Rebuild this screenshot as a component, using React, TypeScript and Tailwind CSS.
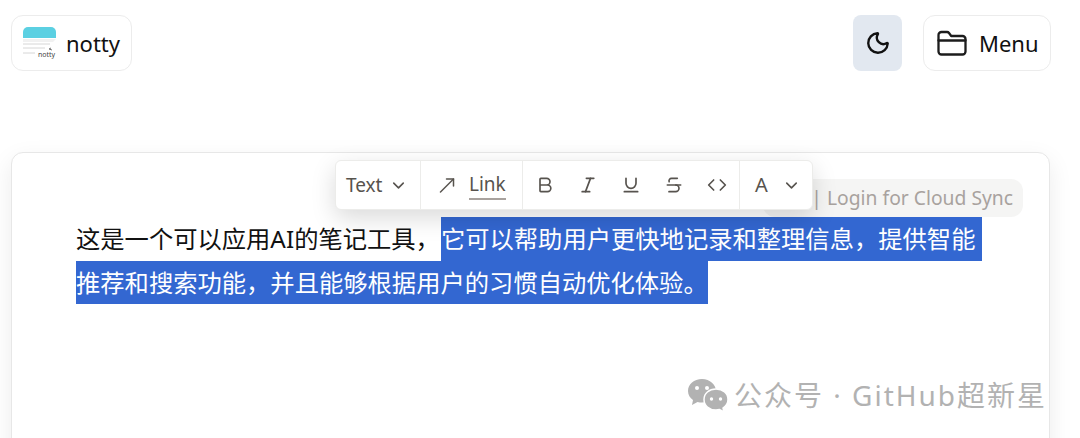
import { Bold, ChevronDown, Code, Italic, Moon, Strikethrough, Underline } from 'lucide-react';

const font = "font-['Noto_Sans','Noto_Sans_CJK_SC',sans-serif]";

function Logo() {
  return (
    <svg width="34" height="32" viewBox="0 0 34 32" className="shrink-0">
      <path d="M0 5a5 5 0 0 1 5-5h23a5 5 0 0 1 5 5v6H0z" fill="#5bd0e2" />
      <path d="M0 12h33l-3 3H0z" fill="#f1f1f1" />
      <path d="M0 17h27M0 21h22M0 26h12" stroke="#d6d6d6" strokeWidth="1" />
      <path d="M28 21l-2 1 3 1" stroke="#777" strokeWidth="1" fill="none" />
      <text x="15" y="30" fontSize="7" fill="#444" fontFamily="Noto Sans, sans-serif">notty</text>
    </svg>
  );
}

function FolderIcon() {
  return (
    <svg width="30" height="26" viewBox="0 0 30 26" fill="none" stroke="#1c1c1c" strokeWidth="2.300" strokeLinejoin="round" strokeLinecap="round" className="shrink-0">
      <path d="M1.500 5a3 3 0 0 1 3-3h5.500a2.500 2.500 0 0 1 2 1l2.200 3H25.500a3 3 0 0 1 3 3v12.500a3 3 0 0 1-3 3h-21a3 3 0 0 1-3-3z" />
      <path d="M1.500 10.500h27" />
    </svg>
  );
}

function LinkArrow() {
  return (
    <svg width="16" height="16" viewBox="0 0 16 16" fill="none" stroke="currentColor" strokeWidth="1.500" strokeLinecap="round" strokeLinejoin="round" className="shrink-0">
      <path d="M1.500 15L14.500 2" />
      <path d="M7.500 2h7v7" />
    </svg>
  );
}

function WeChatIcon() {
  return (
    <svg width="41" height="33" viewBox="0 0 41 33" className="shrink-0">
      <path d="M15 0C7 0 1 5 1 12c0 4 2 7 5 9l-1 5 5.500-3c1.500.4 3 .6 4.500.6C23 23.600 29 18 29 12S23 0 15 0z" fill="#b2b2b2" />
      <path d="M29 10c-7 0-12 4.500-12 10.500S22 31 29 31c1.200 0 2.300-.2 3.500-.5L37 33l-1-4c3-2 5-5 5-8.500C41 14.500 36 10 29 10z" fill="#b2b2b2" stroke="#fff" strokeWidth="1.500" />
      <circle cx="10" cy="9" r="2" fill="#fff" />
      <circle cx="20" cy="9" r="2" fill="#fff" />
      <circle cx="24.500" cy="20" r="1.700" fill="#fff" />
      <circle cx="33.500" cy="20" r="1.700" fill="#fff" />
    </svg>
  );
}

const marks = [
  { Icon: Bold, key: 'bold' },
  { Icon: Italic, key: 'italic' },
  { Icon: Underline, key: 'underline' },
  { Icon: Strikethrough, key: 'strike' },
  { Icon: Code, key: 'code' },
];

function Toolbar() {
  return (
    <div className="absolute left-[323px] top-[7px] z-10 flex h-[50px] w-[478px] items-stretch rounded-md border border-[#ececea] bg-white text-[#57534e] shadow-[0_8px_24px_rgba(0,0,0,0.15)]">
      <div className="flex w-[85px] items-center gap-[7px] pl-[10px] text-[19px] border-r border-[#ececea]">
        <span>Text</span>
        <ChevronDown size={19} strokeWidth={2} />
      </div>
      <div className="flex w-[102px] items-center gap-[14px] pl-[18px] text-[19px] border-r border-[#ececea]">
        <LinkArrow />
        <span className="border-b-2 border-[#a8a29e] leading-[27px]">Link</span>
      </div>
      <div className="flex w-[217px] items-center gap-[23px] pl-[12px] border-r border-[#ececea]">
        {marks.map(({ Icon, key }) => (
          <Icon key={key} size={20} strokeWidth={2} />
        ))}
      </div>
      <div className="flex items-center gap-[14px] pl-[15px] text-[20px]">
        <span>A</span>
        <ChevronDown size={19} strokeWidth={2} />
      </div>
    </div>
  );
}

export default function App() {
  return (
    <div className={`${font} h-[438px] w-[1080px] overflow-hidden bg-white pl-[11px] pr-[30px] pt-[15px]`}>
      <header className="-mr-px flex h-[56px] items-stretch justify-between">
        <div className="flex w-[121px] items-center gap-[9px] rounded-xl border border-[#ececec] bg-white pl-[11px] text-[22px] text-[#111]">
          <Logo />
          <span>notty</span>
        </div>
        <div className="flex items-stretch gap-[21px]">
          <button className="flex w-[49px] items-center justify-center rounded-lg bg-[#e2e8f0] text-[#111]">
            <Moon size={26} strokeWidth={2.2} />
          </button>
          <button className="flex w-[128px] items-center gap-[12px] rounded-xl border border-[#ececec] bg-white pl-[13px] text-[22px] text-[#111]">
            <FolderIcon />
            <span>Menu</span>
          </button>
        </div>
      </header>

      <main className="relative mt-[81px] h-[400px] rounded-xl border border-[#e7e7e7] bg-white pl-[64px] pt-[64px] shadow-[0_8px_24px_rgba(0,0,0,0.08)]">
        <Toolbar />
        <div className="absolute right-[26px] top-[26px] flex h-[38px] w-[260px] items-center justify-end rounded-xl bg-[#f5f5f4] pr-[10px] text-[19.300px] text-[#a8a29e]">
          | Login for Cloud Sync
        </div>
        <div className="relative text-[24.300px] leading-[43px] text-[#111] whitespace-nowrap">
          <div className="flex h-[44px]">
            <span className="mr-[1px]">这是一个可以应用AI的笔记工具，</span>
            <span className="w-[541px] bg-[#3367d1] text-white">它可以帮助用户更快地记录和整理信息，提供智能</span>
          </div>
          <div className="flex h-[43px]">
            <span className="bg-[#3367d1] text-white">推荐和搜索功能，并且能够根据用户的习惯自动优化体验。</span>
          </div>
        </div>
        <div className="absolute left-[675px] top-[221px] flex items-center gap-[6px] whitespace-nowrap text-[28px] tracking-[2px] text-[#b2b2b2]">
          <WeChatIcon />
          <span>公众号 · GitHub超新星</span>
        </div>
      </main>
    </div>
  );
}
